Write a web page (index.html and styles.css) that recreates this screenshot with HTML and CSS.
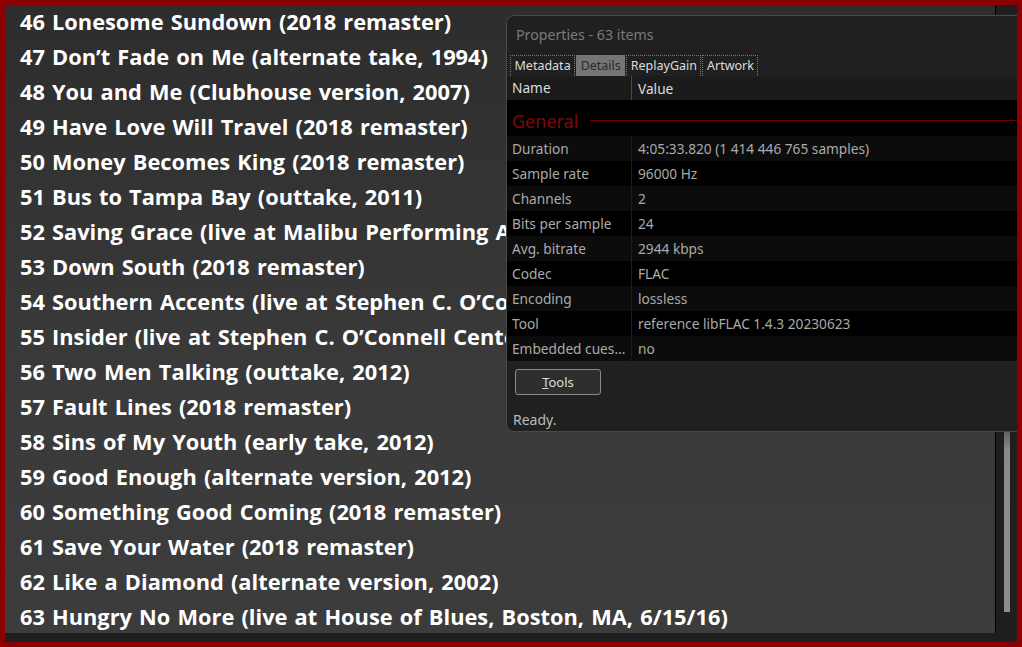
FILE: index.html
```html
<!DOCTYPE html>
<html lang="en">
  <head>
    <meta charset="UTF-8" />
    <title>Playlist - Properties</title>
    <link rel="stylesheet" href="styles.css">
  </head>
  <body>
    <!-- Janela principal com moldura vermelha -->
    <div class="janela">
      <div class="area">
        <ul class="lista">
          <li><span class="num">46</span>Lonesome Sundown (2018 remaster)</li>
          <li><span class="num">47</span>Don’t Fade on Me (alternate take, 1994)</li>
          <li><span class="num">48</span>You and Me (Clubhouse version, 2007)</li>
          <li><span class="num">49</span>Have Love Will Travel (2018 remaster)</li>
          <li><span class="num">50</span>Money Becomes King (2018 remaster)</li>
          <li><span class="num">51</span>Bus to Tampa Bay (outtake, 2011)</li>
          <li><span class="num">52</span>Saving Grace (live at Malibu Performing Arts Center, 2017)</li>
          <li><span class="num">53</span>Down South (2018 remaster)</li>
          <li><span class="num">54</span>Southern Accents (live at Stephen C. O’Connell Center, 2017)</li>
          <li><span class="num">55</span>Insider (live at Stephen C. O’Connell Center, 2017)</li>
          <li><span class="num">56</span>Two Men Talking (outtake, 2012)</li>
          <li><span class="num">57</span>Fault Lines (2018 remaster)</li>
          <li><span class="num">58</span>Sins of My Youth (early take, 2012)</li>
          <li><span class="num">59</span>Good Enough (alternate version, 2012)</li>
          <li><span class="num">60</span>Something Good Coming (2018 remaster)</li>
          <li><span class="num">61</span>Save Your Water (2018 remaster)</li>
          <li><span class="num">62</span>Like a Diamond (alternate version, 2002)</li>
          <li><span class="num">63</span>Hungry No More (live at House of Blues, Boston, MA, 6/15/16)</li>
        </ul>
        <div class="barra">
          <div class="polegar"></div>
        </div>
      </div>
      <div class="rodape"></div>

      <!-- Janela de propriedades por cima da lista -->
      <div class="dialogo">
        <div class="titulo">Properties - 63 items</div>
        <div class="abas">
          <span class="aba">Metadata</span>
          <span class="aba ativa">Details</span>
          <span class="aba">ReplayGain</span>
          <span class="aba">Artwork</span>
        </div>
        <div class="tabela">
          <div class="cabecalho">
            <span class="col-nome">Name</span>
            <span class="col-valor">Value</span>
          </div>
          <div class="grupo">
            <span>General</span>
            <span class="linha"></span>
          </div>
          <div class="linhas">
            <div class="item"><span class="col-nome">Duration</span><span class="col-valor">4:05:33.820 (1 414 446 765 samples)</span></div>
            <div class="item"><span class="col-nome">Sample rate</span><span class="col-valor">96000 Hz</span></div>
            <div class="item"><span class="col-nome">Channels</span><span class="col-valor">2</span></div>
            <div class="item"><span class="col-nome">Bits per sample</span><span class="col-valor">24</span></div>
            <div class="item"><span class="col-nome">Avg. bitrate</span><span class="col-valor">2944 kbps</span></div>
            <div class="item"><span class="col-nome">Codec</span><span class="col-valor">FLAC</span></div>
            <div class="item"><span class="col-nome">Encoding</span><span class="col-valor">lossless</span></div>
            <div class="item"><span class="col-nome">Tool</span><span class="col-valor">reference libFLAC 1.4.3 20230623</span></div>
            <div class="item"><span class="col-nome">Embedded cues...</span><span class="col-valor">no</span></div>
          </div>
        </div>
        <div class="acoes">
          <button class="btn-tools"><u>T</u>ools</button>
        </div>
        <div class="status">Ready.</div>
      </div>
    </div>
  </body>
</html>
```

FILE: styles.css
```css
/* Moldura vermelha em volta de tudo */
body {
  margin: 0;
  background: #8b0000;
  height: 647px;
  overflow: hidden;
}
.janela {
  position: relative;
  margin: 5px;
  height: 637px;
  overflow: hidden;
  display: flex;
  flex-direction: column;
  background: #1e1e1e;
}
.area {
  display: flex;
  height: 628px;
}
/* Lista de faixas */
.lista {
  list-style: none;
  margin: 0;
  padding: 0;
  flex: 1;
  overflow: hidden;
  background: linear-gradient(#2d2d2d, #3a3a3a 60%, #3c3c3c);
  border-right: 1px solid #000;
}
.lista li {
  display: flex;
  align-items: center;
  height: 35px;
  margin-top: -1px;
  margin-bottom: 1px;
  white-space: nowrap;
  font-family: "Open Sans", sans-serif;
  font-weight: 700;
  font-size: 21.8px;
  word-spacing: 1.5px;
  color: #fff;
}
.num {
  width: 40px;
  text-align: right;
  margin-right: 7px;
  flex-shrink: 0;
}
/* Barra de rolagem */
.barra {
  width: 21px;
  position: relative;
  background-color: #151515;
  background-image: radial-gradient(#2a2a2a 0.6px, transparent 0.8px);
  background-size: 2px 2px;
}
.polegar {
  position: absolute;
  left: 8px;
  top: 423px;
  width: 6px;
  height: 184px;
  background: linear-gradient(#5a5a5a, #8a8a8a 12%, #8c8c8c);
}
.rodape {
  height: 9px;
  background: #1e1e1e;
}
/* Janela de propriedades */
.dialogo {
  position: absolute;
  left: 501px;
  top: 10px;
  width: 530px;
  height: 417px;
  box-sizing: border-box;
  background: #202020;
  border: 1px solid #4a4a4a;
  border-radius: 8px 0 0 8px;
  font-family: "Noto Sans", sans-serif;
  font-size: 13.7px;
  color: #aaa;
  display: flex;
  flex-direction: column;
}
.titulo {
  height: 39px;
  line-height: 38px;
  padding-left: 9px;
  color: #7a7a7a;
  font-size: 14.2px;
}
.abas {
  display: flex;
  padding-left: 3px;
  height: 21px;
}
.aba {
  border: 1px dotted #777;
  border-bottom: none;
  padding: 0 3.5px;
  line-height: 20px;
  color: #ddd;
  font-size: 12.5px;
  margin-right: 1px;
}
.aba.ativa {
  background: #757575;
  color: #2a2a2a;
}
.tabela {
  background: #000;
  height: 285px;
  display: flex;
  flex-direction: column;
}
.cabecalho {
  display: flex;
  height: 24px;
  background: #1b1b1b;
  color: #ddd;
  align-items: center;
}
.col-nome {
  width: 119px;
  padding-left: 5px;
  flex-shrink: 0;
  white-space: nowrap;
  overflow: hidden;
}
.col-valor {
  padding-left: 6px;
  white-space: nowrap;
}
.cabecalho .col-nome {
  border-right: 1px solid #4a4a4a;
  line-height: 24px;
}
.grupo {
  display: flex;
  align-items: center;
  height: 36px;
  padding: 5px 0 0 5px;
  box-sizing: border-box;
  color: #7c0a0a;
  font-size: 18px;
}
.grupo .linha {
  flex: 1;
  height: 1px;
  background: #6a0000;
  margin-left: 12px;
}
.item {
  display: flex;
  height: 25px;
  line-height: 20px;
  align-items: center;
}
.item:nth-child(odd) {
  background: #0c0c0c;
}
.item .col-nome {
  padding-top: 3px;
  padding-bottom: 2px;
  border-right: 1px solid #1e1e1e;
}
.acoes {
  padding: 8px 0 0 8px;
  height: 35px;
}
.btn-tools {
  width: 86px;
  height: 26px;
  background: #2e2e2e;
  border: 1px solid #8a8a8a;
  border-radius: 3px;
  color: #ddd;
  font-family: "Noto Sans", sans-serif;
  font-size: 13px;
  padding: 0;
}
.status {
  padding: 6px 0 0 6px;
  color: #bbb;
  font-size: 14px;
}
```
